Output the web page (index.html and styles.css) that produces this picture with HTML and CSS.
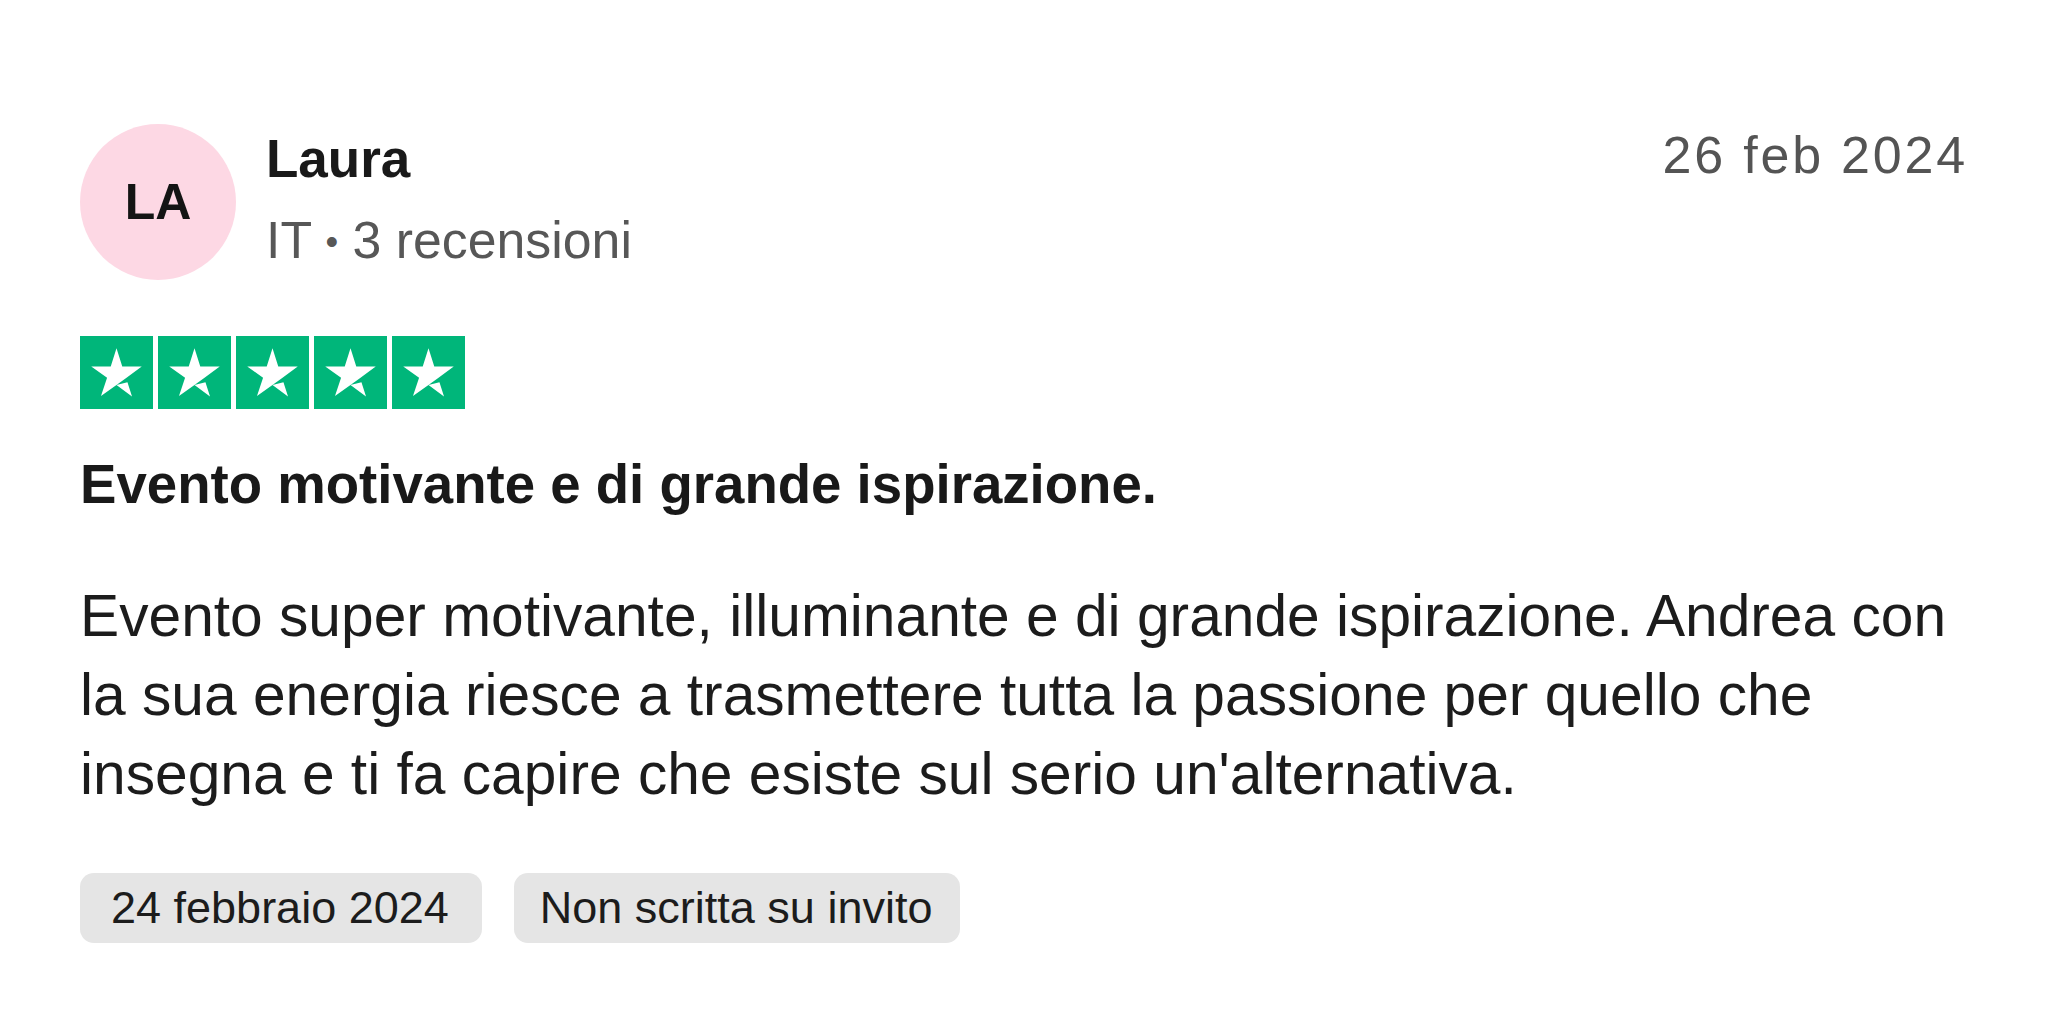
FILE: index.html
```html
<!DOCTYPE html>
<html lang="it">
<head>
<meta charset="utf-8">
<title>Recensione</title>
<link rel="stylesheet" href="styles.css">
</head>
<body>
<article class="review">
  <header class="review-header">
    <div class="avatar">LA</div>
    <div class="consumer">
      <div class="consumer-name">Laura</div>
      <div class="consumer-meta">IT <span class="dot">•</span> 3 recensioni</div>
    </div>
    <time class="review-date">26 feb 2024</time>
  </header>
  <div class="stars">
    <span class="star"><svg viewBox="0 0 24 24"><path d="M12 16.1l3.6-.9 1.5 4.7L12 16.1zm8.3-6.1h-6.4L12 4l-1.9 6H3.7l5.2 3.7-2 6 5.2-3.7 3.2-2.3 5-3.7z" fill="#fff"/></svg></span>
    <span class="star"><svg viewBox="0 0 24 24"><path d="M12 16.1l3.6-.9 1.5 4.7L12 16.1zm8.3-6.1h-6.4L12 4l-1.9 6H3.7l5.2 3.7-2 6 5.2-3.7 3.2-2.3 5-3.7z" fill="#fff"/></svg></span>
    <span class="star"><svg viewBox="0 0 24 24"><path d="M12 16.1l3.6-.9 1.5 4.7L12 16.1zm8.3-6.1h-6.4L12 4l-1.9 6H3.7l5.2 3.7-2 6 5.2-3.7 3.2-2.3 5-3.7z" fill="#fff"/></svg></span>
    <span class="star"><svg viewBox="0 0 24 24"><path d="M12 16.1l3.6-.9 1.5 4.7L12 16.1zm8.3-6.1h-6.4L12 4l-1.9 6H3.7l5.2 3.7-2 6 5.2-3.7 3.2-2.3 5-3.7z" fill="#fff"/></svg></span>
    <span class="star"><svg viewBox="0 0 24 24"><path d="M12 16.1l3.6-.9 1.5 4.7L12 16.1zm8.3-6.1h-6.4L12 4l-1.9 6H3.7l5.2 3.7-2 6 5.2-3.7 3.2-2.3 5-3.7z" fill="#fff"/></svg></span>
  </div>
  <h2 class="review-title">Evento motivante e di grande ispirazione.</h2>
  <p class="review-text">Evento super motivante, illuminante e di grande ispirazione. Andrea con la sua energia riesce a trasmettere tutta la passione per quello che insegna e ti fa capire che esiste sul serio un'alternativa.</p>
  <div class="tags">
    <span class="tag tag-date">24 febbraio 2024</span>
    <span class="tag tag-invite">Non scritta su invito</span>
  </div>
</article>
</body>
</html>
```
FILE: styles.css
```css
html, body {
  margin: 0;
  padding: 0;
  background: #ffffff;
}

body {
  font-family: "Liberation Sans", Arial, sans-serif;
  color: #1c1c1c;
}

.review {
  width: 1888px;
  padding: 124px 80px 0 80px;
}

.review-header {
  display: flex;
  align-items: flex-start;
}

.avatar {
  width: 156px;
  height: 156px;
  border-radius: 50%;
  background: #fdd8e4;
  display: flex;
  align-items: center;
  justify-content: center;
  font-size: 50px;
  font-weight: 700;
  color: #141414;
  flex: none;
  margin-right: 30px;
}

.consumer {
  flex: 1;
  margin-top: 5px;
}

.consumer-name {
  font-size: 53px;
  font-weight: 700;
  line-height: 60px;
  color: #191919;
}

.consumer-meta {
  font-size: 51.8px;
  line-height: 60px;
  margin-top: 21px;
  color: #575757;
}

.dot {
  font-size: 0.7em;
  vertical-align: 0.12em;
}

.review-date {
  font-size: 52px;
  line-height: 60px;
  letter-spacing: 2.8px;
  margin-right: 0;
  margin-top: 1px;
  color: #545454;
}

.stars {
  display: flex;
  gap: 5px;
  margin-top: 56px;
}

.star {
  width: 73px;
  height: 73px;
  background: #00b67a;
  display: flex;
}

.star svg {
  width: 73px;
  height: 73px;
}

.review-title {
  margin: 44px 0 0 0;
  font-size: 54.6px;
  line-height: 64px;
  font-weight: 700;
  color: #191919;
}

.review-text {
  margin: 59px 0 0 0;
  font-size: 58.7px;
  line-height: 79px;
  color: #1c1c1c;
}

.tags {
  display: flex;
  gap: 32px;
  margin-top: 60px;
}

.tag {
  background: #e5e5e5;
  border-radius: 14px;
  height: 70px;
  line-height: 70px;
  font-size: 45px;
  color: #1c1c1c;
}

.tag-date {
  padding: 0 33px 0 31px;
}

.tag-invite {
  padding: 0 28px 0 26px;
}
```
